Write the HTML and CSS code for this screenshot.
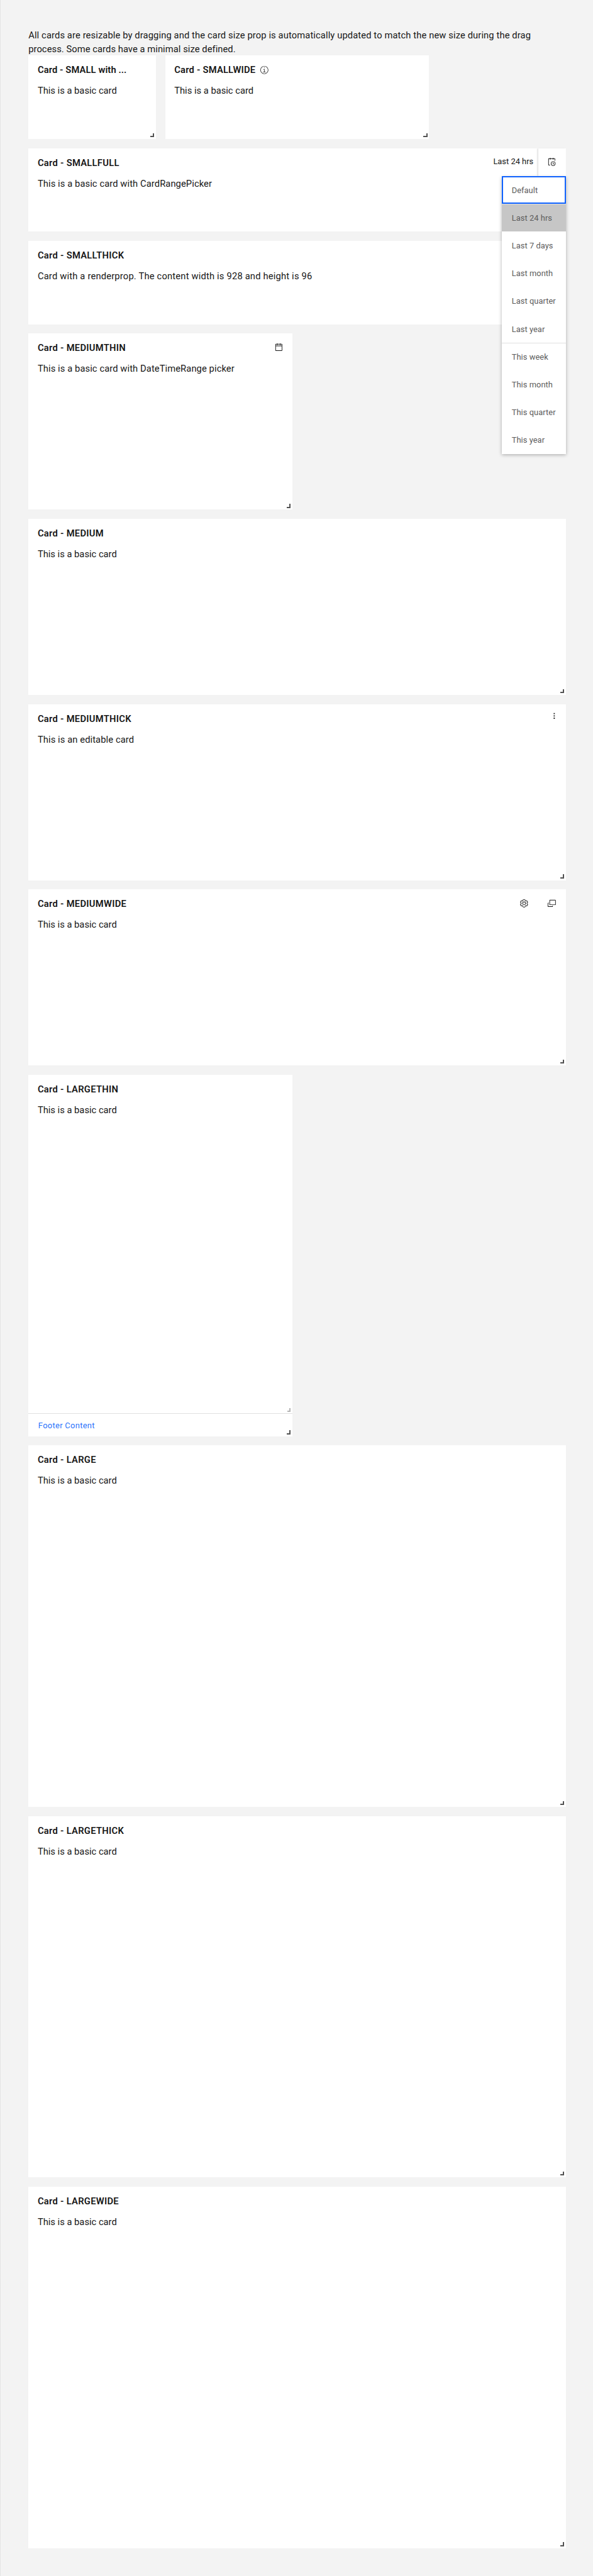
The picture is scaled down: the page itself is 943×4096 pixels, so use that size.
FILE: index.html
```
<!DOCTYPE html>
<html lang="en">
<head>
<meta charset="utf-8">
<title>Resizable cards</title>
<link rel="stylesheet" href="styles.css">
</head>
<body>
<main class="page">
  <p class="intro">All cards are resizable by dragging and the card size prop is automatically updated to match the new size during the drag<br><span class="intro-end">process. Some cards have a minimal size defined.</span></p>
  <div class="grid">
    <section class="card small span-2">
      <header class="card-header"><h2 class="card-title tight">Card - SMALL with ...</h2></header>
      <div class="card-body">This is a basic card</div>
      <span class="handle"></span>
    </section>
    <section class="card small span-4">
      <header class="card-header">
        <h2 class="card-title">Card - SMALLWIDE</h2>
        <svg class="icon info" viewBox="0 0 16 16"><path d="M8.5 11V6.500h-2v1h1V11H6v1h4v-1zM8 3.500c-.4 0-.8.3-.8.8S7.600 5 8 5s.8-.3.8-.8-.4-.7-.8-.7z"/><path d="M8 15c-3.900 0-7-3.100-7-7s3.100-7 7-7 7 3.100 7 7-3.100 7-7 7zM8 2C4.700 2 2 4.700 2 8s2.700 6 6 6 6-2.700 6-6-2.700-6-6-6z"/></svg>
      </header>
      <div class="card-body">This is a basic card</div>
      <span class="handle"></span>
    </section>
    <section class="card small span-8">
      <header class="card-header">
        <h2 class="card-title">Card - SMALLFULL</h2>
        <div class="range">
          <span class="range-label">Last 24 hrs</span>
          <button class="tool range-button" aria-label="Select time range"><svg class="icon" viewBox="0 0 32 32"><path d="M21 30a8 8 0 1 1 8-8 8 8 0 0 1-8 8Zm0-14a6 6 0 1 0 6 6 6 6 0 0 0-6-6Z"/><path d="M22.590 25 20 22.410V18h2v3.590l2 2z"/><path d="M28 6a2 2 0 0 0-2-2h-4V2h-2v2h-8V2h-2v2H6a2 2 0 0 0-2 2v20a2 2 0 0 0 2 2h4v-2H6V6h4v2h2V6h8v2h2V6h4v6h2Z"/></svg></button>
        </div>
      </header>
      <div class="card-body normal">This is a basic card with CardRangePicker</div>
      <ul class="menu">
        <li class="menu-item focused">Default</li>
        <li class="menu-item divided selected">Last 24 hrs</li>
        <li class="menu-item">Last 7 days</li>
        <li class="menu-item">Last month</li>
        <li class="menu-item">Last quarter</li>
        <li class="menu-item">Last year</li>
        <li class="menu-item divided">This week</li>
        <li class="menu-item">This month</li>
        <li class="menu-item">This quarter</li>
        <li class="menu-item">This year</li>
      </ul>
    </section>
    <section class="card small span-8">
      <header class="card-header"><h2 class="card-title">Card - SMALLTHICK</h2></header>
      <div class="card-body loose">Card with a renderprop. The content width is 928 and height is 96</div>
    </section>
    <section class="card medium span-4">
      <header class="card-header">
        <h2 class="card-title">Card - MEDIUMTHIN</h2>
        <button class="tool" aria-label="Pick dates"><svg class="icon" viewBox="0 0 32 32"><path d="M26 4h-4V2h-2v2h-8V2h-2v2H6a2 2 0 0 0-2 2v20a2 2 0 0 0 2 2h20a2 2 0 0 0 2-2V6a2 2 0 0 0-2-2Zm0 22H6V12h20Zm0-16H6V6h4v2h2V6h8v2h2V6h4Z"/></svg></button>
      </header>
      <div class="card-body normal">This is a basic card with DateTimeRange picker</div>
      <span class="handle"></span>
    </section>
    <section class="card medium span-8">
      <header class="card-header"><h2 class="card-title">Card - MEDIUM</h2></header>
      <div class="card-body">This is a basic card</div>
      <span class="handle"></span>
    </section>
    <section class="card medium span-8">
      <header class="card-header">
        <h2 class="card-title">Card - MEDIUMTHICK</h2>
        <button class="tool kebab" aria-label="Open menu"><svg class="icon" viewBox="0 0 32 32"><path d="M14 6h4v4h-4zM14 14h4v4h-4zM14 22h4v4h-4z"/></svg></button>
      </header>
      <div class="card-body normal">This is an editable card</div>
      <span class="handle"></span>
    </section>
    <section class="card medium span-8">
      <header class="card-header">
        <h2 class="card-title">Card - MEDIUMWIDE</h2>
        <button class="tool" aria-label="Settings"><svg class="icon" viewBox="0 0 32 32"><path d="M27,16.76c0-.25,0-.5,0-.76s0-.51,0-.77l1.92-1.68A2,2,0,0,0,29.3,11L26.94,7a2,2,0,0,0-1.73-1,2,2,0,0,0-.64.1l-2.43.82a11.35,11.35,0,0,0-1.31-.75l-.51-2.52a2,2,0,0,0-2-1.61H13.64a2,2,0,0,0-2,1.61l-.51,2.52a11.48,11.48,0,0,0-1.32.75L7.43,6.06A2,2,0,0,0,6.79,6,2,2,0,0,0,5.06,7L2.7,11a2,2,0,0,0,.41,2.51L5,15.24c0,.25,0,.5,0,.76s0,.51,0,.77L3.11,18.45A2,2,0,0,0,2.7,21L5.06,25a2,2,0,0,0,1.73,1,2,2,0,0,0,.64-.1l2.43-.82a11.35,11.35,0,0,0,1.31.75l.51,2.52a2,2,0,0,0,2,1.61h4.720a2,2,0,0,0,2-1.61l.51-2.52a11.48,11.48,0,0,0,1.32-.75l2.42.82a2,2,0,0,0,.64.1,2,2,0,0,0,1.73-1L29.3,21a2,2,0,0,0-.41-2.51ZM25.21,24l-3.43-1.16a8.86,8.86,0,0,1-2.71,1.57L18.36,28H13.64l-.71-3.55a9.36,9.36,0,0,1-2.7-1.57L6.79,24,4.43,20l2.720-2.4a8.9,8.9,0,0,1,0-3.13L4.43,12,6.79,8l3.43,1.16a8.86,8.86,0,0,1,2.71-1.57L13.64,4h4.72l.71,3.55a9.36,9.36,0,0,1,2.7,1.57L25.21,8,27.57,12l-2.72,2.4a8.9,8.9,0,0,1,0,3.130L27.57,20Z"/><path d="M16,22a6,6,0,1,1,6-6A5.940,5.940,0,0,1,16,22Zm0-10a3.910,3.910,0,0,0-4,4,3.910,3.910,0,0,0,4,4,3.910,3.910,0,0,0,4-4A3.910,3.910,0,0,0,16,12Z"/></svg></button>
        <button class="tool" aria-label="Expand"><svg class="icon" viewBox="0 0 32 32"><path d="M28 4H10a2 2 0 0 0-2 2v14a2 2 0 0 0 2 2h18a2 2 0 0 0 2-2V6a2 2 0 0 0-2-2Zm0 16H10V6h18Z"/><path d="M18 26H4V16h2v-2H4a2 2 0 0 0-2 2v10a2 2 0 0 0 2 2h14a2 2 0 0 0 2-2v-2h-2Z"/></svg></button>
      </header>
      <div class="card-body">This is a basic card</div>
      <span class="handle"></span>
    </section>
    <section class="card large span-4">
      <header class="card-header"><h2 class="card-title">Card - LARGETHIN</h2></header>
      <div class="card-body">This is a basic card</div>
      <footer class="card-footer"><span class="handle inner"></span><a class="footer-link">Footer Content</a></footer>
      <span class="handle"></span>
    </section>
    <section class="card large span-8">
      <header class="card-header"><h2 class="card-title">Card - LARGE</h2></header>
      <div class="card-body">This is a basic card</div>
      <span class="handle"></span>
    </section>
    <section class="card large span-8">
      <header class="card-header"><h2 class="card-title">Card - LARGETHICK</h2></header>
      <div class="card-body">This is a basic card</div>
      <span class="handle"></span>
    </section>
    <section class="card large span-8">
      <header class="card-header"><h2 class="card-title">Card - LARGEWIDE</h2></header>
      <div class="card-body">This is a basic card</div>
      <span class="handle"></span>
    </section>
  </div>
</main>
</body>
</html>
```

FILE: styles.css
```
/* 1rem is ten design units on a 1024-unit wide page */
html {
  font-size: 9.2086px;
}

*, *::before, *::after {
  box-sizing: border-box;
}

body {
  margin: 0;
  background: #f3f3f3;
  color: #161616;
  font-family: Roboto, "Liberation Sans", sans-serif;
  font-size: 1.6rem;
  line-height: 2.4rem;
}

.page {
  height: 444.8rem;
  border-left: 1px solid #e4e4e4;
  padding: 4.85rem 4.7rem 0 4.8rem;
}

.intro {
  height: 4.75rem;
  margin: 0;
  letter-spacing: 0.0125rem;
  white-space: nowrap;
}

.intro-end {
  letter-spacing: 0.0066rem;
}

.grid {
  display: grid;
  grid-template-columns: repeat(8, minmax(0, 1fr));
  gap: 1.6rem;
}

.span-2 { grid-column: span 2; }
.span-4 { grid-column: span 4; }
.span-8 { grid-column: 1 / -1; }

/* The first two cards share a row; other half-width cards stand alone. */
.medium.span-4,
.large.span-4 {
  grid-column: 1 / span 4;
}

.card {
  position: relative;
  display: flex;
  flex-direction: column;
  background: #fff;
}

.small { height: 14.4rem; }
.medium { height: 30.4rem; }
.large { height: 62.4rem; }

.card-header {
  display: flex;
  align-items: center;
  height: 4.8rem;
  flex: none;
  padding-left: 1.6rem;
}

.card-title {
  margin: 0.2rem auto 0 0;
  font-size: 1.6rem;
  font-weight: 600;
  letter-spacing: 0.032rem;
  white-space: nowrap;
}

.card-title.tight {
  letter-spacing: 0.012rem;
}

.info {
  margin: 0.2rem auto 0 0;
  color: #393939;
}

.card-header:has(.info) .card-title {
  margin-right: 0.75rem;
  letter-spacing: 0.024rem;
}

.card-body {
  flex: 1;
  padding: 0.1rem 1.6rem 0;
  white-space: nowrap;
}

.card-body.loose {
  letter-spacing: 0.02rem;
}

.card-body.normal {
  letter-spacing: 0.01rem;
}

.icon {
  display: block;
  width: 1.6rem;
  height: 1.6rem;
  fill: currentColor;
}

.tool {
  display: flex;
  align-items: center;
  justify-content: center;
  width: 4.8rem;
  height: 4.8rem;
  padding: 0;
  border: 0;
  background: #fff;
  color: #161616;
}

.kebab {
  height: 4rem;
  width: 4rem;
  align-self: flex-start;
}

.range {
  display: flex;
  align-items: center;
  gap: 0.8rem;
}

.range-label {
  font-size: 1.4rem;
  margin-top: -0.1rem;
}

.range-button {
  box-shadow: -0.1rem 0 0.3rem rgba(0, 0, 0, 0.2);
  clip-path: inset(0 0 0 -0.6rem);
}

.menu {
  position: absolute;
  z-index: 2;
  top: 4.8rem;
  right: 0;
  width: 11rem;
  margin: 0;
  padding: 0;
  list-style: none;
  background: #fff;
  box-shadow: 0 0.2rem 0.6rem rgba(0, 0, 0, 0.3);
}

.menu-item {
  display: flex;
  align-items: center;
  height: 4.8rem;
  padding: 0.15rem 0 0 1.65rem;
  border: 0 solid #e0e0e0;
  color: #5c5c5c;
  font-size: 1.4rem;
  letter-spacing: 0.006rem;
}

.divided {
  border-top-width: 1px;
}

.focused {
  box-shadow: inset 0 0 0 2px #0f62fe;
}

.selected {
  background: #c6c6c6;
}

.handle {
  position: absolute;
  right: 0.3rem;
  bottom: 0.3rem;
  width: 0.7rem;
  height: 0.7rem;
  border: solid #525252;
  border-width: 0 2px 2px 0;
}

.card-footer {
  position: relative;
  display: flex;
  align-items: center;
  height: 4rem;
  padding: 0.2rem 1.7rem 0;
  border-top: 1px solid #e0e0e0;
}

.inner {
  bottom: 4.2rem;
  width: 0.6rem;
  height: 0.6rem;
  border-color: #b4b4b4;
}

.footer-link {
  color: #2a73fb;
  font-size: 1.4rem;
  letter-spacing: 0.035rem;
}
```
